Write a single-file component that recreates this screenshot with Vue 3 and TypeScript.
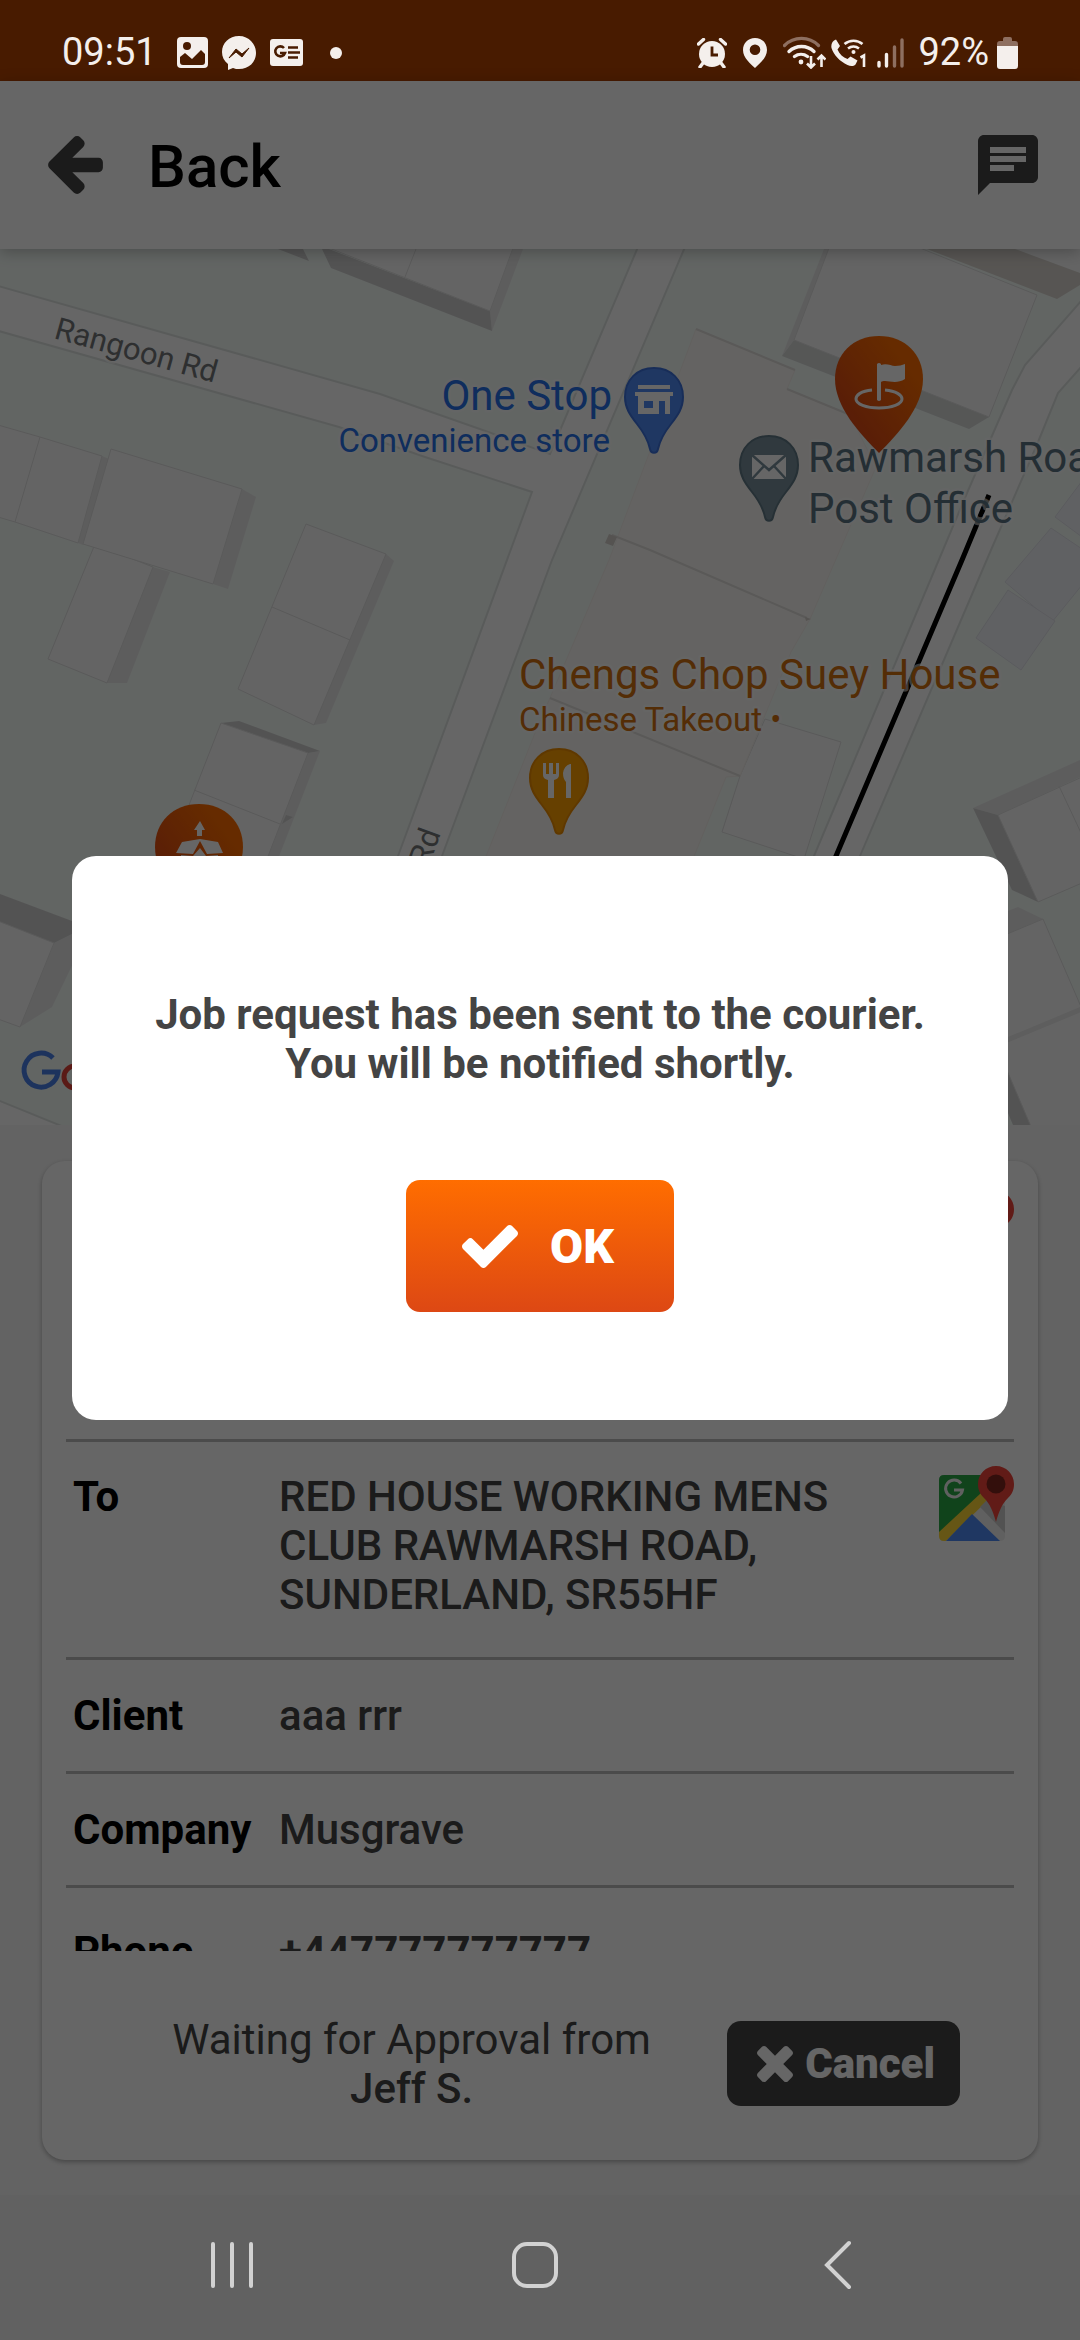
<script setup lang="ts">
import { ref } from 'vue'

interface DetailRow {
  label: string
  value: string
  kind?: 'row-from' | 'row-to' | 'row-tel'
}

const rows: DetailRow[] = [
  { label: '', value: '', kind: 'row-from' },
  { label: 'To', value: 'RED HOUSE WORKING MENS CLUB RAWMARSH ROAD, SUNDERLAND, SR55HF', kind: 'row-to' },
  { label: 'Client', value: 'aaa rrr' },
  { label: 'Company', value: 'Musgrave' },
  { label: 'Phone', value: '+447777777777', kind: 'row-tel' },
]

const dialogOpen = ref(true)
</script>

<template>
  <div class="screen">
    <div class="status">
      <span class="status-text">09:51</span>
      <svg class="ico-image" width="31" height="31" viewBox="0 0 31 31" aria-hidden="true">
        <rect width="31" height="31" rx="4" fill="#f4efec" />
        <circle cx="10" cy="9" r="4" fill="#481b00" />
        <path d="M3 20l5-4 7 6 9-9 4 4v8q0 3-3 3H6q-3 0-3-3z" fill="#481b00" />
      </svg>
      <svg class="ico-msg" width="34" height="34" viewBox="0 0 34 34" aria-hidden="true">
        <path d="M17 0C7 0 0 7 0 16c0 5 2 9 6 12v6l5-2c2 1 4 1 6 1 10 0 17-7 17-16S27 0 17 0z" fill="#f4efec" />
        <path d="M7 22l7-9 6 5 7-6-7 9-6-5z" fill="#481b00" stroke="#481b00" stroke-width="1" stroke-linejoin="round" />
      </svg>
      <svg class="ico-news" width="33" height="27" viewBox="0 0 33 27" aria-hidden="true">
        <rect width="33" height="27" rx="3" fill="#f4efec" />
        <path d="M14 9a5 5 0 1 0 1 5h-5" fill="none" stroke="#481b00" stroke-width="2.6" />
        <path d="M18 8.500h10M18 13.500h12M18 18.500h10" stroke="#481b00" stroke-width="2.600" />
      </svg>
      <span class="dot"></span>

      <svg class="ico-alarm" width="30" height="30" viewBox="0 0 30 30" aria-hidden="true">
        <circle cx="15" cy="16" r="13" fill="#f4efec" />
        <path d="M1.500 6l5-4.500M28.500 6l-5-4.500M6 25l-3 4M24 25l3 4" stroke="#f4efec" stroke-width="3.400" stroke-linecap="round" />
        <path d="M15 8.500v8.500h6" fill="none" stroke="#481b00" stroke-width="2.800" />
      </svg>
      <svg class="ico-pin" width="24" height="30" viewBox="0 0 24 30" aria-hidden="true">
        <path d="M12 0C5 0 0 5 0 12c0 8 8 14 12 18 4-4 12-10 12-18C24 5 19 0 12 0zm0 6.500a5.300 5.300 0 1 1 0 10.600 5.300 5.300 0 0 1 0-10.600z" fill="#f4efec" fill-rule="evenodd" />
      </svg>
      <svg class="ico-wifi" width="43" height="33" viewBox="0 0 43 33" fill="none" aria-hidden="true">
        <path d="M1.500 9.500a24 24 0 0 1 34 0" stroke="#8e6f60" stroke-width="3.200" stroke-linecap="round" />
        <path d="M6 15.500a18 18 0 0 1 25 0M11.500 20.500a11 11 0 0 1 13 0" stroke="#f4efec" stroke-width="3.400" stroke-linecap="round" />
        <circle cx="18" cy="26" r="2.400" fill="#f4efec" />
        <path d="M28 20v11M24 27.500l4 4 4-4M38.500 31V20M34.500 23.500l4-4 4 4" stroke="#f4efec" stroke-width="2.600" />
      </svg>
      <svg class="ico-call" width="36" height="29" viewBox="0 0 36 29" fill="none" aria-hidden="true">
        <path d="M5 1.500L9 8 6.500 11.500c2 4.500 5.500 8 10 9.500l3-2.500 7 4-2 4c-2 2-5 2-8 .5C9 23.500 2.500 17 .5 10c-.8-3.500 1-7.500 4.500-8.500z" fill="#f4efec" />
        <path d="M13.500 6a14 14 0 0 1 18 0M17 10.500a9 9 0 0 1 11 0" stroke="#f4efec" stroke-width="2.600" />
        <circle cx="22.500" cy="14" r="2" fill="#f4efec" />
        <path d="M29.500 19.500l3.500-2v11.500" stroke="#f4efec" stroke-width="2.600" />
      </svg>
      <svg class="ico-signal" width="27" height="30" viewBox="0 0 27 30" stroke-width="3.400" stroke-linecap="round" aria-hidden="true">
        <path d="M2 24.500V28M9.500 16.500V28" stroke="#f4efec" />
        <path d="M17.500 9V28M25 2V28" stroke="#8e6f60" />
      </svg>
      <span class="status-text">92%</span>
      <svg class="ico-batt" width="21" height="32" viewBox="0 0 21 32" aria-hidden="true">
        <path d="M6 2q0-2 2-2h5q2 0 2 2v2h3q3 0 3 3v4H0V7q0-3 3-3h3z" fill="#8e6f60" />
        <path d="M0 9h21v20q0 3-3 3H3q-3 0-3-3z" fill="#f4efec" />
      </svg>
    </div>

    <div class="stage">
      <header class="bar">
        <button class="icon-btn" type="button" aria-label="Back">
          <svg width="55" height="58" viewBox="64 181 1472 1558">
            <path fill="#444" d="M1536 896v128q0 53-32.500 90.500t-84.500 37.500h-704l293 294q38 36 38 90t-38 90l-75 76q-37 37-90 37-52 0-91-37l-651-652q-37-37-37-90 0-52 37-91l651-650q38-38 91-38 52 0 90 38l75 74q38 38 38 91t-38 91l-293 293h704q52 0 84.500 37.500t32.500 90.500z" />
          </svg>
        </button>
        <h1>Back</h1>
        <button class="icon-btn chat" type="button" aria-label="Messages">
          <svg width="60" height="60" viewBox="2 2 20 20">
            <path fill="#444" d="M20 2H4c-1.100 0-1.990.9-1.990 2L2 22l4-4h14c1.100 0 2-.9 2-2V4c0-1.100-.9-2-2-2zM6 9h12v2H6V9zm8 5H6v-2h8v2zm4-6H6V6h12v2z" />
          </svg>
        </button>
      </header>

      <svg class="map" viewBox="0 0 1080 876" preserveAspectRatio="xMidYMin slice" role="img" aria-label="Map">
        <defs>
          <linearGradient id="brand" x1="1" y1="0" x2="0" y2="1">
            <stop offset="0.2" stop-color="#ff6d00" />
            <stop offset="0.8" stop-color="#dd4814" />
          </linearGradient>
          <path id="poi" d="M30 1C13 1 1 13 1 30c0 11 5 18 12 27 8 10 11 16 13 25 1 5 7 5 8 0 2-9 5-15 13-25 7-9 12-16 12-27C59 13 47 1 30 1z" />
          <path id="stop" d="M44 0C18 0 0 18 0 43c0 28 25 55 44 74 19-19 44-46 44-74C88 18 70 0 44 0z" />
        </defs>
        <rect width="1080" height="876" fill="#f5fcf8" />

        <!-- roads -->
        <g fill="#fff" stroke="#dfe4e2" stroke-width="2">
          <path d="M-5 36L380 145L477 179L550 205L638-2H685L552 311L442 607L343 880H297L398 607L532 243L425 208L339 178L-5 81z" />
          <path d="M1082 51L1025 116L1012 141L967 244L943 301L814 607L700 880H750L860 607L991 301L1036 198L1058 144L1082 117z" />
          <path d="M-5 850L64 878H-5z" />
        </g>

        <!-- building walls -->
        <g fill="#e9e9e9">
          <path d="M102 207L109 210L83 296L78 294z" />
          <path d="M242 240L256 248L228 340L213 335z" />
          <path d="M153 318L170 323L127 434H107z" />
          <path d="M386 305L394 312L326 474L314 476z" />
          <path d="M308 504L320 502L278 610H265z" />
          <path d="M490 62L492 82L523 0H513z" />
          <path d="M824 0H829L794 91L782 107z" />
          <path d="M740 527L744 523L726 583L722 582z" />
          <path d="M973 559L1080 511V528L998 566z" />
          <path d="M54 694L80 681V700L52 758L20 778z" />
          <path d="M1000 665L1018 658L1043 670L1000 688z" />
        </g>
        <g fill="#d0d0d0">
          <path d="M278 0L309 12L303 0zM322 0L331 19L492 82L490 62L329 0z" />
          <path d="M221 474L239 472L320 502L308 504z" />
          <path d="M973 559L998 566L1038 653L1012 641z" />
          <path d="M1000 805L1032 876H1013L1000 845z" />
          <path d="M0 645L80 675V681L54 694L0 673z" />
          <path d="M282 575L293 568L286 566z" />
        </g>
        <path d="M794 91L782 107L969 180L989 168z" fill="#d6d9d8" />

        <!-- roofs -->
        <g fill="#fafafa" stroke="#e0e0e0" stroke-width="1">
          <path d="M-2 176L40 188L102 207L78 294L15 273L-2 268zM40 188L15 273" />
          <path d="M95 295L153 318L107 434L48 410z" />
          <path d="M111 200L242 240L213 335L83 295z" />
          <path d="M306 275L386 305L314 476L238 440zM272 358L350 391" />
          <path d="M221 474L308 504L267 610H172L189 556zM194 541L280 575" />
          <path d="M329-1L490 62L513-1zM416 0L405 28" />
          <path d="M829-1L794 91L989 168L1037 46L920-1z" />
          <path d="M765 470L841 493L804 610L722 583L740 527z" />
          <path d="M998 566L1082 528V634L1038 653zM1059 537L1082 586" />
          <path d="M1000 688L1043 670L1082 760V880H1032L1000 805z" />
          <path d="M-2 672L54 694L20 778L-2 770z" />
        </g>
        <path d="M1000 794L1082 760" stroke="#eaeaea" stroke-width="5" />
        <path d="M1015 0L1080 24V0z" fill="#fafafa" />
        <path d="M927 0L1057 50L1080 36V24L1015 0z" fill="#dad5cf" />
        <path d="M696 80L795 121L787 140L850 166L876 218L810 370L791 403L740 527L726 528L693 610H485L535 484L609 311z" fill="#faf8f4" stroke="#f5f0ec" stroke-width="1" />
        <path d="M696 80L795 121M787 140L848 165M612 286L650 301L807 369M550 449L740 527" fill="none" stroke="#e0dedb" stroke-width="2" />
        <path d="M609 285l8 3-4 9-8-3zM805 368l6 2-5 2z" fill="#d4cfcb" />
        <g fill="#f1f2f8" stroke="#e2e3ea" stroke-width="1">
          <path d="M1082 232L1055 268L1082 288z" />
          <path d="M1051 279L1005 333L1052 373L1082 336V300z" />
          <path d="M1008 341L1055 372L1021 421L976 389z" />
        </g>

        <!-- route -->
        <path d="M989 246L962 311L836 607L820 645" fill="none" stroke="#000" stroke-width="5" />

        <!-- labels -->
        <g class="map-text">
          <text class="road" transform="translate(53 89) rotate(15.500)">Rangoon Rd</text>
          <text class="road" transform="translate(441 584) rotate(-70)" text-anchor="end">Rd</text>
          <g fill="#2670e8">
            <text class="big" x="612" y="161" text-anchor="end">One Stop</text>
            <text class="small" x="610" y="203" text-anchor="end">Convenience store</text>
          </g>
          <g fill="#5a7482">
            <text class="big" x="808" y="223">Rawmarsh Road</text>
            <text class="big" x="808" y="274">Post Office</text>
          </g>
          <g fill="#d2700f">
            <text class="big" x="519" y="440">Chengs Chop Suey House</text>
            <text class="small" x="519" y="482">Chinese Takeout •</text>
          </g>
        </g>

        <!-- places -->
        <g transform="translate(624 118)">
          <use href="#poi" fill="#4f8bf5" stroke="#3c72dc" stroke-width="2" />
          <path d="M14 18h32v4H14zM11 25h38v4h-3v18H14V29h-3zM20 34v7h9v-7zM35 34v13h6V34z" fill="#fff" fill-rule="evenodd" />
        </g>
        <g transform="translate(739 186)">
          <use href="#poi" fill="#78909c" stroke="#5f7886" stroke-width="2" />
          <path d="M13 20h34v24H13z" fill="#fff" />
          <path d="M13 20l17 15 17-15M13 44l12-13M47 44L35 31" fill="none" stroke="#78909c" stroke-width="2.500" />
        </g>
        <g transform="translate(529 499)">
          <use href="#poi" fill="#ffa000" stroke="#ee8d00" stroke-width="2" />
          <path d="M14 15v12q0 4 5 5v18h6V32q5-1 5-5V15h-3v11h-3V15h-4v11h-3V15zM41 16q-6 2-7 9 0 6 3 9v16h5V16z" fill="#fff" />
        </g>
        <g transform="translate(835 87)">
          <use href="#stop" fill="url(#brand)" />
          <path d="M37 54C26 55 21 59 21 63c0 5 10 9 23 9s23-4 23-9c0-4-6-8-17-9" fill="none" stroke="#fff" stroke-width="3" />
          <path d="M42 28q2-2 4 0v1c6-2 10 1 14 1s7-1 10-2v15c-8 5-15 2-20 2-2 0-3 0-4 1v18q-2 2-4 0z" fill="#fff" />
        </g>
        <g transform="translate(155 555)">
          <use href="#stop" fill="url(#brand)" />
          <path d="M45 17l5 9h-3v6h-5v-6h-3zM27 38l18-3 18 3 5 11-16 1-7-13-7 13-17-1zM26 51l12 1 7-8 6 8 12-1v24H26z" fill="#fff" />
        </g>

        <!-- map provider logo -->
        <g fill="none" stroke-width="5">
          <path d="M53 809A17 17 0 1 0 58 823H42" stroke="#4a80e8" />
          <circle cx="75" cy="828" r="11" stroke="#e04338" />
        </g>
      </svg>

      <main class="content">
        <section class="card">
          <div class="scroller">
            <table>
              <tbody>
                <tr v-for="(row, i) in rows" :key="i" :class="row.kind">
                  <th scope="row">{{ row.label }}</th>
                  <td class="value">{{ row.value }}</td>
                  <td class="action">
                    <button v-if="row.kind === 'row-from' || row.kind === 'row-to'" class="icon-btn" type="button" aria-label="Open in maps">
                      <svg width="75" height="75" viewBox="0 0 75 75">
                        <path d="M5 9h56q5 0 5 5v56q0 5-5 5H5q-5 0-5-5V14q0-5 5-5z" fill="#f0f0f0" />
                        <path d="M5 9h42v18L0 70V14q0-5 5-5z" fill="#28a844" />
                        <path d="M0 66L42 27l6 8L7 75H5q-5 0-5-5z" fill="#ffd835" />
                        <path d="M7 75L33 48l28 27z" fill="#4f8bf5" />
                        <path d="M41 41l7-7 18 6v27z" fill="#cdcdcd" />
                        <path d="M22 17.500A8.500 8.500 0 1 0 23.500 24H15" fill="none" stroke="#f0f0f0" stroke-width="3" />
                        <path d="M57 0c10 0 18 8 18 18 0 6-2 10-6 14-6 6-9 13-12 24-3-11-6-18-12-24-4-4-6-8-6-14C39 8 47 0 57 0z" fill="#f2443a" />
                        <circle cx="57" cy="18" r="9.500" fill="#80261f" />
                      </svg>
                    </button>
                  </td>
                </tr>
              </tbody>
            </table>
          </div>
          <footer class="foot">
            <p>Waiting for Approval from <strong>Jeff S.</strong></p>
            <button class="cancel" type="button">
              <svg width="36" height="36" viewBox="302 366 1188 1188" aria-hidden="true">
                <path fill="#fff" d="M1490 1322q0 40-28 68l-136 136q-28 28-68 28t-68-28l-294-294-294 294q-28 28-68 28t-68-28l-136-136q-28-28-28-68t28-68l294-294-294-294q-28-28-28-68t28-68l136-136q28-28 68-28t68 28l294 294 294-294q28-28 68-28t68 28l136 136q28 28 28 68t-28 68l-294 294 294 294q28 28 28 68z" />
              </svg>
              Cancel
            </button>
          </footer>
        </section>
      </main>

      <div v-if="dialogOpen" class="overlay">
        <div class="dialog" role="alertdialog" aria-modal="true" aria-labelledby="dialog-text">
          <p id="dialog-text">Job request has been sent to the courier. You will be notified shortly.</p>
          <button class="ok" type="button" @click="dialogOpen = false">
            <svg width="56" height="43" viewBox="121 334 1550 1188" aria-hidden="true">
              <path fill="#fff" d="M1671 566q0 40-28 68l-724 724-136 136q-28 28-68 28t-68-28l-136-136-362-362q-28-28-28-68t28-68l136-136q28-28 68-28t68 28l294 295 656-657q28-28 68-28t68 28l136 136q28 28 28 68z" />
            </svg>
            OK
          </button>
        </div>
      </div>
    </div>

    <nav class="system-nav" aria-label="System">
      <button class="icon-btn" type="button" aria-label="Recent apps">
        <svg width="44" height="48" viewBox="0 0 44 48" stroke="#d2d2d2" stroke-width="4" stroke-linecap="round">
          <path d="M3 3V45M22 3V45M41 3V45" />
        </svg>
      </button>
      <button class="icon-btn" type="button" aria-label="Home">
        <svg width="48" height="48" viewBox="0 0 48 48" fill="none" stroke="#d2d2d2" stroke-width="4">
          <rect x="3" y="3" width="42" height="42" rx="13" />
        </svg>
      </button>
      <button class="icon-btn" type="button" aria-label="Go back">
        <svg width="30" height="50" viewBox="0 0 30 50" fill="none" stroke="#d2d2d2" stroke-width="4" stroke-linecap="round">
          <path d="M26 3L4 25L26 47" />
        </svg>
      </button>
    </nav>
  </div>
</template>

<style>
body {
  margin: 0;
}
</style>

<style scoped>
.screen {
  display: flex;
  flex-direction: column;
  height: 100vh;
  overflow: hidden;
  font-family: Roboto, "Liberation Sans", sans-serif;
  font-size: 42px;
  line-height: 49px;
  color: #444;
}
button {
  font: inherit;
  border: 0;
  cursor: pointer;
}
svg {
  display: block;
  flex: none;
}
.icon-btn {
  padding: 0;
  background: none;
}

.status {
  display: flex;
  align-items: center;
  flex: none;
  box-sizing: border-box;
  height: 81px;
  padding: 24px 62px 0;
  background: #481b00;
}
.status-text {
  font-size: 38px;
  color: #f4efec;
}
.ico-image { margin-left: 20px; }
.ico-msg { margin-left: 14px; }
.ico-news { margin-left: 14px; }
.dot {
  width: 12px;
  height: 12px;
  margin-left: 27px;
  border-radius: 50%;
  background: #f4efec;
}
.ico-alarm { margin-left: auto; }
.ico-pin { margin-left: 16px; }
.ico-wifi { margin-left: 16px; }
.ico-call { margin-left: 5px; }
.ico-signal { margin: 0 14px 0 10px; }
.ico-batt { margin-left: 8px; }

.stage {
  position: relative;
  display: flex;
  flex-direction: column;
  flex: 1;
  min-height: 0;
  background: #f8f8f8;
}
.bar {
  position: relative;
  display: flex;
  align-items: center;
  flex: none;
  box-sizing: border-box;
  height: 168px;
  padding: 0 42px 0 48px;
  background: #fff;
  box-shadow: 0 3px 14px rgba(0, 0, 0, 0.25);
}
.bar h1 {
  margin: 0 0 0 45px;
  padding-top: 3px;
  font-size: 60px;
  line-height: 70px;
  font-weight: 500;
  color: #000;
}
.chat {
  margin-left: auto;
}

.map {
  width: 100%;
  height: 876px;
}
.map-text {
  stroke: rgba(255, 255, 255, 0.6);
  stroke-width: 5px;
  stroke-linejoin: round;
  paint-order: stroke;
}
.big {
  font-size: 42px;
}
.small {
  font-size: 33px;
}
.road {
  font-size: 31px;
  fill: #737779;
}

.content {
  display: flex;
  flex: 1;
  min-height: 0;
  padding: 36px 42px 35px;
}
.card {
  display: flex;
  flex-direction: column;
  flex: 1;
  min-width: 0;
  padding: 6px 24px 0;
  border-radius: 23px;
  background: #fff;
  box-shadow: 0 2px 5px rgba(0, 0, 0, 0.3);
}
.scroller {
  flex: 1;
  min-height: 0;
  overflow: hidden;
}
table {
  width: 100%;
  table-layout: fixed;
  border-spacing: 0;
}
th,
td {
  box-sizing: border-box;
  padding: 31px 0;
  border-bottom: 3px solid #bbb;
  vertical-align: top;
  text-align: left;
}
th {
  width: 213px;
  padding-left: 7px;
  font-weight: 700;
  color: #000;
}
.value {
  font-weight: 500;
}
.row-from .value {
  height: 275px;
}
.row-to th,
.row-to td {
  padding-top: 30px;
  padding-bottom: 38px;
}
.row-tel th,
.row-tel td {
  padding-top: 39px;
}
.row-tel .value {
  font-weight: 700;
}
.action,
.row-to .action,
.row-tel .action {
  width: 75px;
  padding: 24px 0 0;
}
.foot {
  display: flex;
  align-items: center;
  flex: none;
  box-sizing: border-box;
  height: 209px;
  padding: 16px 54px 0 30px;
}
.foot p {
  flex: 1;
  margin: 0;
  text-align: center;
}
.foot strong {
  display: block;
  font-weight: 500;
}
.cancel {
  display: flex;
  align-items: center;
  gap: 12px;
  height: 85px;
  padding: 0 25px 0 30px;
  border-radius: 14px;
  background: #444;
  color: #fff;
  font-weight: 900;
}

.overlay {
  position: absolute;
  inset: 0;
  display: flex;
  align-items: center;
  justify-content: center;
  background: rgba(0, 0, 0, 0.6);
}
.dialog {
  display: flex;
  flex-direction: column;
  align-items: center;
  flex: 1;
  gap: 92px;
  margin: 0 72px;
  padding: 134px 60px 108px;
  border-radius: 24px;
  background: #fff;
}
.dialog p {
  margin: 0;
  font-weight: 700;
  text-align: center;
}
.ok {
  display: flex;
  align-items: center;
  justify-content: center;
  gap: 32px;
  height: 132px;
  padding: 0 60px 0 56px;
  border-radius: 14px;
  background: linear-gradient(#ff6d00, #dd4814);
  color: #fff;
  font-size: 48px;
  font-weight: 900;
}

.system-nav {
  display: grid;
  grid-template-columns: repeat(3, 1fr);
  place-items: center;
  flex: none;
  box-sizing: border-box;
  height: 145px;
  padding: 0 91px 5px 81px;
  background: #616161;
}
</style>
